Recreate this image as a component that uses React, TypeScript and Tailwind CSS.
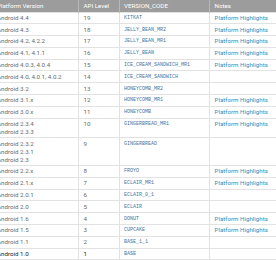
import React from 'react'

type Row = {
  versions: string[]
  api: string
  code: string
  notes?: boolean
}

const rows: Row[] = [
  { versions: ['Android 4.4'], api: '19', code: 'KITKAT', notes: true },
  { versions: ['Android 4.3'], api: '18', code: 'JELLY_BEAN_MR2', notes: true },
  { versions: ['Android 4.2, 4.2.2'], api: '17', code: 'JELLY_BEAN_MR1', notes: true },
  { versions: ['Android 4.1, 4.1.1'], api: '16', code: 'JELLY_BEAN', notes: true },
  { versions: ['Android 4.0.3, 4.0.4'], api: '15', code: 'ICE_CREAM_SANDWICH_MR1', notes: true },
  { versions: ['Android 4.0, 4.0.1, 4.0.2'], api: '14', code: 'ICE_CREAM_SANDWICH' },
  { versions: ['Android 3.2'], api: '13', code: 'HONEYCOMB_MR2' },
  { versions: ['Android 3.1.x'], api: '12', code: 'HONEYCOMB_MR1', notes: true },
  { versions: ['Android 3.0.x'], api: '11', code: 'HONEYCOMB', notes: true },
  { versions: ['Android 2.3.4', 'Android 2.3.3'], api: '10', code: 'GINGERBREAD_MR1', notes: true },
  { versions: ['Android 2.3.2', 'Android 2.3.1', 'Android 2.3'], api: '9', code: 'GINGERBREAD' },
  { versions: ['Android 2.2.x'], api: '8', code: 'FROYO', notes: true },
  { versions: ['Android 2.1.x'], api: '7', code: 'ECLAIR_MR1', notes: true },
  { versions: ['Android 2.0.1'], api: '6', code: 'ECLAIR_0_1' },
  { versions: ['Android 2.0'], api: '5', code: 'ECLAIR' },
  { versions: ['Android 1.6'], api: '4', code: 'DONUT', notes: true },
  { versions: ['Android 1.5'], api: '3', code: 'CUPCAKE', notes: true },
  { versions: ['Android 1.1'], api: '2', code: 'BASE_1_1' },
  { versions: ['Android 1.0'], api: '1', code: 'BASE' },
]

export default function App() {
  return (
    <div className="w-[276px] h-[260px] overflow-hidden bg-white font-['Roboto','Liberation_Sans',sans-serif]">
      <table className="table-fixed border-collapse ml-[-8.5px] w-[300px]">
        <colgroup>
          <col className="w-[86.5px]" />
          <col className="w-[40.5px]" />
          <col className="w-[90.5px]" />
          <col className="w-[82.5px]" />
        </colgroup>
        <thead>
          <tr className="bg-[#9c9c9c] text-white text-[6.2px] leading-[8px]">
            <th className="text-left font-normal pl-[4.5px] py-[1.75px] border-l border-[#b8b8b8]">Platform Version</th>
            <th className="text-left font-normal pl-[4.5px] py-[1.75px] border-l border-[#b8b8b8]">API Level</th>
            <th className="text-left font-normal pl-[4.5px] py-[1.75px] border-l border-[#b8b8b8]">VERSION_CODE</th>
            <th className="text-left font-normal pl-[4.5px] py-[1.75px] border-l border-[#b8b8b8]">Notes</th>
          </tr>
        </thead>
        <tbody className="text-[6.2px] leading-[8px]">
          {rows.map((r, i) => {
            const last = i === rows.length - 1
            const txt = last ? 'text-[#222]' : 'text-[#6a6a6a]'
            return (
              <tr key={r.code} className="bg-white">
                <td className={`align-top pl-[4.5px] py-[1.4px] border border-[#e2e2e2] ${txt}`}>
                  {r.versions.map((v) => (
                    <div key={v}>{v}</div>
                  ))}
                </td>
                <td className={`align-top pl-[4.5px] py-[1.4px] border border-[#e2e2e2] ${txt}`}>{r.api}</td>
                <td className="align-top pl-[4.5px] py-[1.4px] border border-[#e2e2e2] text-[#3e78a3] text-[5px] font-['Liberation_Mono',monospace]">
                  {r.code}
                </td>
                <td className="align-top pl-[4.5px] py-[1.4px] border border-[#e2e2e2] text-[#3a8bb8]">
                  {r.notes ? 'Platform Highlights' : ''}
                </td>
              </tr>
            )
          })}
        </tbody>
      </table>
    </div>
  )
}
